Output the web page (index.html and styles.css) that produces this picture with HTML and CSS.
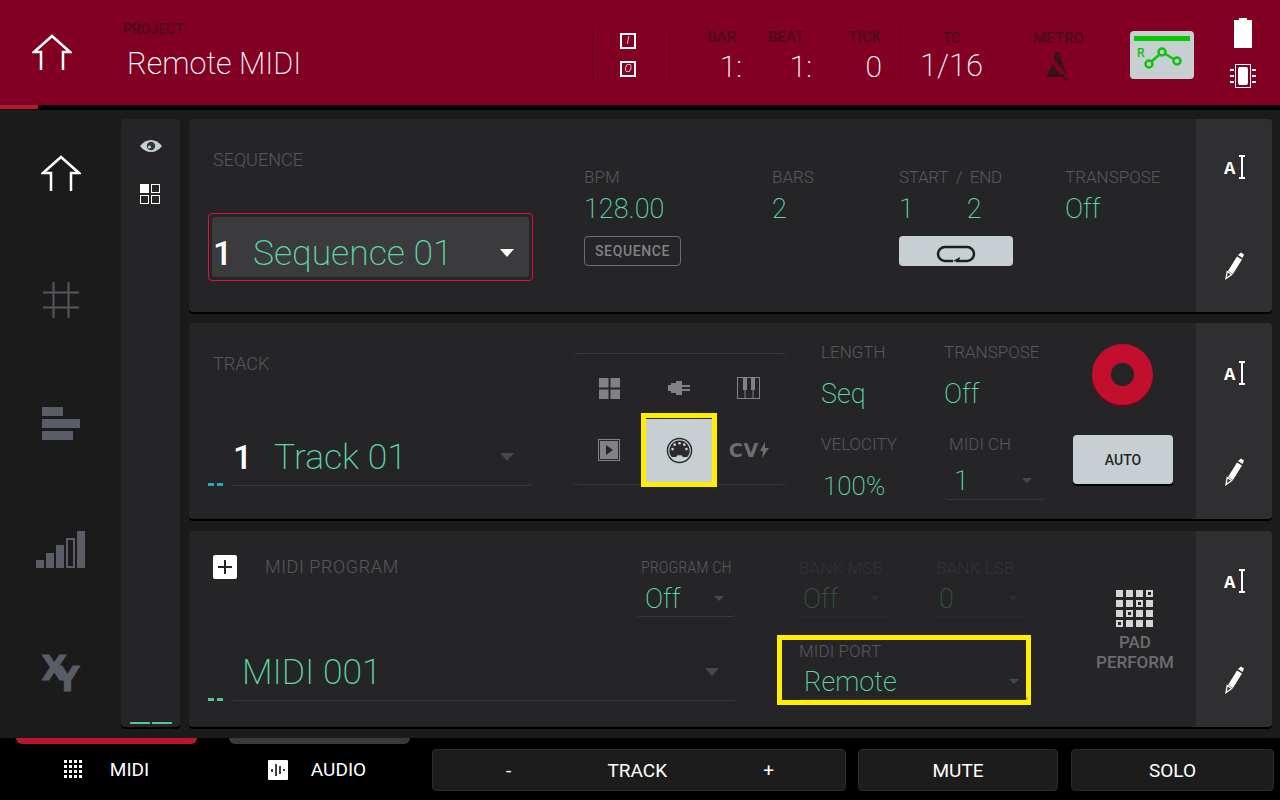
FILE: index.html
```html
<!DOCTYPE html>
<html lang="en">
<head>
  <meta charset="UTF-8">
  <title>Remote MIDI</title>
  <link rel="stylesheet" href="styles.css">
</head>
<body>
  <header class="topbar">
    <div class="top-home">
      <svg width="40" height="38" viewBox="0 0 40 38"><path class="home-line" d="M9 36V18H2L20 2l18 16h-7v18"/></svg>
    </div>
    <div class="project">
      <div class="top-label">PROJECT</div>
      <div class="project-name">Remote MIDI</div>
    </div>
    <div class="io">
      <span class="io-box">I</span>
      <span class="io-box">O</span>
    </div>
    <div class="transport">
      <div class="tp tp-bar"><div class="top-label">BAR</div><div class="tp-val">1:</div></div>
      <div class="tp tp-beat"><div class="top-label">BEAT</div><div class="tp-val">1:</div></div>
      <div class="tp tp-tick"><div class="top-label">TICK</div><div class="tp-val">0</div></div>
    </div>
    <div class="tc">
      <div class="top-label">TC</div>
      <div class="tp-val">1/16</div>
    </div>
    <div class="metro">
      <div class="top-label">METRO</div>
      <svg width="24" height="30" viewBox="0 0 24 30"><path fill="#3a1016" d="M10 0h4l8 24L9 7zM8 10l9 15H1z"/><path stroke="#820024" stroke-width="1.500" d="M1 3l15 19"/><path stroke="#3a1016" stroke-width="2" d="M16 22l6 7"/></svg>
    </div>
    <div class="remote">
      <div class="remote-bar"></div>
      <svg width="50" height="32" viewBox="0 0 50 32"><g fill="none" stroke="#0bc40b" stroke-width="2.500"><circle cx="15" cy="20" r="3.500"/><circle cx="28" cy="8" r="3.500"/><circle cx="43" cy="17" r="3.500"/><path d="M18 17l7-6M31.500 10l8 5"/></g><text x="3" y="13" class="remote-r">R</text></svg>
    </div>
    <div class="status">
      <svg width="18" height="30" viewBox="0 0 18 30"><path fill="#fff" d="M0 2h5V0h8v2h5v28H0z"/></svg>
      <svg width="26" height="24" viewBox="0 0 26 24"><rect x="5.500" y="0.500" width="15" height="23" fill="none" stroke="#fff"/><rect x="8" y="3" width="10" height="18" rx="2" fill="#fff"/><path stroke="#fff" stroke-width="2" d="M0 6h4M0 12h4M0 18h4M22 6h4M22 12h4M22 18h4"/></svg>
    </div>
  </header>
  <div class="progress-line"><div class="progress-fill"></div></div>

  <div class="main">
    <nav class="nav">
      <svg width="40" height="38" viewBox="0 0 40 38"><path class="home-line" d="M10 36V18H2L20 2l18 16h-8v18"/></svg>
      <svg width="36" height="36" viewBox="0 0 36 36"><path class="nav-line" d="M10.500 0v36M25.500 0v36M0 10.500h36M0 25.500h36"/></svg>
      <svg width="38" height="33" viewBox="0 0 38 33"><path fill="#5a5d65" d="M0 0h21v9H0zM0 12h38v9H0zM0 24h31v9H0z"/></svg>
      <svg class="nav-levels" width="50" height="37" viewBox="0 0 50 37"><path fill="#5a5d65" d="M0 29h8v8H0zM10 22h8v15h-8zM20 14h8v23h-8zM41 0h8v37h-8z"/><rect x="31" y="8" width="7" height="28" fill="none" stroke="#5a5d65" stroke-width="2"/></svg>
      <div class="xy"><span class="xy-x">X</span><span class="xy-y">Y</span></div>
    </nav>

    <aside class="strip">
      <svg class="eye" width="22" height="12" viewBox="0 0 22 12"><path fill="#c8cfd2" d="M0 6c3-4 7-6 11-6s8 2 11 6c-3 4-7 6-11 6S3 10 0 6z"/><circle cx="11" cy="6" r="4.200" fill="#33363a"/><circle cx="9.500" cy="7" r="1.500" fill="#c8cfd2"/></svg>
      <div class="view-grid">
        <span class="view-cell on"></span><span class="view-cell"></span>
        <span class="view-cell"></span><span class="view-cell"></span>
      </div>
      <div class="strip-dash"><span></span><span></span></div>
    </aside>

    <div class="panels">
      <!-- sequence -->
      <section class="panel panel-seq">
        <div class="panel-body seq-grid">
          <div class="seq-left">
            <div class="sec-label">SEQUENCE</div>
            <div class="seq-select">
              <div class="seq-inner">
                <span class="num">1</span>
                <span class="big-name">Sequence 01</span>
                <span class="tri tri-white"></span>
              </div>
            </div>
          </div>
          <div class="field">
            <div class="label">BPM</div>
            <div class="value">128.00</div>
            <button class="outline-btn">SEQUENCE</button>
          </div>
          <div class="field">
            <div class="label">BARS</div>
            <div class="value">2</div>
          </div>
          <div class="field field-loop">
            <div class="label label-startend">START&nbsp; /&nbsp; END</div>
            <div class="value value-pair"><span>1</span><span>2</span></div>
            <button class="loop-btn">
              <svg width="40" height="18" viewBox="0 0 40 18"><path fill="none" stroke="#1d1d1f" stroke-width="2.500" d="M17 16H9a7 7 0 0 1 0-14h22a7 7 0 0 1 0 14H20"/><path fill="#1d1d1f" d="M24 12l-7 4 6 1z"/></svg>
            </button>
          </div>
          <div class="field">
            <div class="label">TRANSPOSE</div>
            <div class="value">Off</div>
          </div>
        </div>
        <div class="panel-side">
          <svg class="ai" width="24" height="26" viewBox="0 0 24 26"><use href="#ai-icon"/></svg>
          <svg width="20" height="28" viewBox="0 0 20 28"><use href="#pencil-icon"/></svg>
        </div>
      </section>

      <!-- track -->
      <section class="panel panel-track">
        <div class="panel-body track-grid">
          <div class="track-left">
            <div class="sec-label">TRACK</div>
            <div class="name-row">
              <span class="dash dash-blue"></span>
              <div class="name-select">
                <span class="num num-track">1</span>
                <span class="big-name">Track 01</span>
                <span class="tri tri-dim"></span>
              </div>
            </div>
          </div>
          <div class="types">
            <span class="type-cell type-first"><svg width="21" height="21" viewBox="0 0 22 22"><path fill="#808285" d="M0 0h10v10H0zM12 0h10v10H12zM0 12h10v10H0zM12 12h10v10H12z"/></svg></span>
            <span class="type-cell type-first"><svg width="22" height="16" viewBox="0 0 22 16"><path fill="#808285" d="M0 5h3V3h5V1h6v4h8v2h-8v2h8v2h-8v4H8v-2H3v-2H0z"/></svg></span>
            <span class="type-cell type-first"><svg width="24" height="23" viewBox="0 0 24 23"><rect x="0.500" y="0.500" width="22" height="21" fill="none" stroke="#808285"/><path fill="#808285" d="M6 1h4v12H6zM14 1h4v12h-4z"/><path stroke="#808285" d="M8 13v9M16 13v9"/></svg></span>
            <span class="type-cell"><svg width="22" height="22" viewBox="0 0 22 22"><rect x="0.500" y="0.500" width="21" height="21" fill="none" stroke="#808285"/><rect x="2" y="2" width="18" height="18" fill="#808285"/><path fill="#252527" d="M8 6l7 5-7 5z"/></svg></span>
            <span class="type-cell type-on">
              <svg width="27" height="27" viewBox="0 0 28 28"><circle cx="14" cy="14" r="12.500" fill="none" stroke="#2b2b2e" stroke-width="1.500"/><path fill="#2b2b2e" d="M14 3.500a10.500 10.500 0 0 1 8 17.300h-4.500l-1.500-2h-4l-1.500 2H6a10.500 10.500 0 0 1 8-17.300z"/><g fill="#c8cfd2"><circle cx="14" cy="6.500" r="1.400"/><circle cx="9" cy="8" r="1.400"/><circle cx="19" cy="8" r="1.400"/><circle cx="6.800" cy="12.500" r="1.400"/><circle cx="21.200" cy="12.500" r="1.400"/></g></svg>
            </span>
            <span class="type-cell cv">CV<svg width="9" height="16" viewBox="0 0 9 16"><path fill="#6c6e71" d="M5 0L0 9h3l-1 7 7-10H5z"/></svg></span>
          </div>
          <div class="track-params">
            <div class="field">
              <div class="label">LENGTH</div>
              <div class="value">Seq</div>
            </div>
            <div class="field">
              <div class="label">TRANSPOSE</div>
              <div class="value">Off</div>
            </div>
            <div class="field">
              <div class="label">VELOCITY</div>
              <div class="value value-vel">100%</div>
            </div>
            <div class="field">
              <div class="label label-ch">MIDI CH</div>
              <div class="mini-select mini-ch"><span class="value">1</span><span class="tri tri-small"></span></div>
            </div>
          </div>
          <div class="rec-col">
            <div class="rec-btn"><span></span></div>
            <button class="auto-btn">AUTO</button>
          </div>
        </div>
        <div class="panel-side">
          <svg class="ai" width="24" height="26" viewBox="0 0 24 26"><use href="#ai-icon"/></svg>
          <svg width="20" height="28" viewBox="0 0 20 28"><use href="#pencil-icon"/></svg>
        </div>
      </section>

      <!-- midi program -->
      <section class="panel panel-prog">
        <div class="panel-body prog-grid">
          <div class="prog-main">
            <div class="prog-row-top">
              <div class="prog-title">
                <span class="plus-btn"><svg width="16" height="16" viewBox="0 0 16 16"><path stroke="#252527" stroke-width="2" d="M1 8h14M8 1v14"/></svg></span>
                <span class="sec-label">MIDI PROGRAM</span>
              </div>
              <div class="prog-top">
                <div class="prog-field">
                  <div class="label label-narrow">PROGRAM CH</div>
                  <div class="mini-select"><span class="value">Off</span><span class="tri tri-small"></span></div>
                </div>
                <div class="prog-field is-off">
                  <div class="label label-wide">BANK MSB</div>
                  <div class="mini-select"><span class="value">Off</span><span class="tri tri-small"></span></div>
                </div>
                <div class="prog-field is-off">
                  <div class="label label-wide">BANK LSB</div>
                  <div class="mini-select"><span class="value">0</span><span class="tri tri-small"></span></div>
                </div>
              </div>
            </div>
            <div class="prog-row-bottom">
              <div class="name-row">
                <span class="dash dash-green"></span>
                <div class="name-select name-prog">
                  <span class="big-name">MIDI 001</span>
                  <span class="tri tri-dim"></span>
                </div>
              </div>
              <div class="port-box">
                <div class="label label-wide">MIDI PORT</div>
                <div class="port-select"><span class="port-val">Remote</span><span class="tri tri-small"></span></div>
              </div>
            </div>
          </div>
          <div class="pad-perform">
            <svg width="38" height="38" viewBox="0 0 38 38">
              <g fill="#d5d5d5">
                <rect width="7" height="7"/><rect x="10" width="7" height="7"/><rect x="20" width="7" height="7"/><rect x="30" width="7" height="7"/>
                <rect y="10" width="7" height="7"/><rect x="10" y="10" width="7" height="7"/><rect x="20" y="10" width="7" height="7"/><rect x="30" y="10" width="7" height="7"/>
                <rect y="20" width="7" height="7"/><rect x="10" y="20" width="7" height="7"/><rect x="20" y="20" width="7" height="7"/><rect x="30" y="20" width="7" height="7"/>
                <rect y="30" width="7" height="7"/><rect x="10" y="30" width="7" height="7"/><rect x="20" y="30" width="7" height="7"/><rect x="30" y="30" width="7" height="7"/>
              </g>
              <g fill="#252527"><rect x="32" y="2" width="3" height="3"/><rect x="22" y="12" width="3" height="3"/><rect x="12" y="22" width="3" height="3"/><rect x="2" y="32" width="3" height="3"/></g>
            </svg>
            <div class="pad-text">PAD<br>PERFORM</div>
          </div>
        </div>
        <div class="panel-side">
          <svg class="ai" width="24" height="26" viewBox="0 0 24 26"><use href="#ai-icon"/></svg>
          <svg width="20" height="28" viewBox="0 0 20 28"><use href="#pencil-icon"/></svg>
        </div>
      </section>
    </div>
  </div>

  <footer class="footer">
    <div class="tab tab-on">
      <svg width="18" height="18" viewBox="0 0 18 18"><path stroke="#fff" stroke-width="3" stroke-dasharray="3 2" d="M0 1.500h18M0 6.500h18M0 11.500h18M0 16.500h18"/></svg>
      <span>MIDI</span>
    </div>
    <div class="tab tab-audio">
      <svg width="20" height="20" viewBox="0 0 20 20"><rect width="20" height="20" rx="1" fill="#fff"/><path stroke="#000" stroke-width="1.500" d="M4 9v3M8 4v12M12 6v8M16 9v2"/></svg>
      <span>AUDIO</span>
    </div>
    <div class="foot-btn foot-track"><span>-</span><span>TRACK</span><span>+</span></div>
    <div class="foot-btn foot-mute">MUTE</div>
    <div class="foot-btn foot-solo">SOLO</div>
  </footer>

  <svg class="defs" width="0" height="0">
    <defs>
      <g id="ai-icon">
        <text x="0" y="19" class="ai-a">A</text>
        <path fill="none" stroke="#fff" stroke-width="2" d="M15 1h6M18 1v22M15 23h6"/>
      </g>
      <g id="pencil-icon">
        <path fill="#fff" d="M14 3l3-2.500 3 2-1.500 3.500zM13 4.500l5 3L9 22l-5-3z"/>
        <path fill="none" stroke="#fff" stroke-width="1.300" d="M3.200 19.500l4.500 3L2 26.500z"/>
      </g>
    </defs>
  </svg>
</body>
</html>
```

FILE: styles.css
```css
* {
  box-sizing: border-box;
}

body {
  margin: 0;
  width: 1280px;
  height: 800px;
  overflow: hidden;
  background: #000;
  color: #fff;
  font-family: "Roboto", "Liberation Sans", sans-serif;
  font-weight: 300;
}

button {
  font-family: inherit;
  padding: 0;
}

.defs {
  position: absolute;
}

/* top bar */
.topbar {
  height: 105px;
  background: #820024;
  display: flex;
}

.top-home {
  width: 123px;
  padding: 34px 0 0 32px;
}

.home-line {
  fill: none;
  stroke: #fff;
  stroke-width: 2.5;
}

.nav-line {
  fill: none;
  stroke: #55585f;
  stroke-width: 2;
}

.project {
  width: 469px;
  padding-top: 20px;
}

.top-label {
  font-size: 14px;
  font-weight: 500;
  color: #4a0c1a;
  line-height: 18px;
}

.project-name {
  font-size: 30.5px;
  font-weight: 200;
  line-height: 40px;
  padding: 6px 0 0 4px;
}

.io {
  width: 78px;
  height: 54px;
  margin-top: 27px;
  border-left: 1px solid #6b001e;
  border-right: 1px solid #6b001e;
  padding: 6px 0 0 27px;
  display: flex;
  flex-direction: column;
  gap: 12px;
}

.io-box {
  width: 16px;
  height: 16px;
  border: 2px solid #fff;
  font-size: 11px;
  font-style: italic;
  line-height: 12px;
  text-align: center;
}

.transport {
  width: 230px;
  height: 54px;
  margin-top: 27px;
  border-right: 1px solid #6b001e;
  display: flex;
}

.tp {
  text-align: right;
}

.tp-bar {
  width: 72px;
}

.tp-beat {
  width: 70px;
}

.tp-tick {
  width: 70px;
}

.tp .top-label {
  font-size: 15px;
  padding-top: 1px;
  margin-bottom: 3px;
}

.tp-bar .top-label {
  padding-right: 6px;
}

.tp-beat .top-label {
  padding-right: 8px;
}

.tp-tick .top-label {
  padding-right: 1px;
}

.tp-val {
  font-size: 30px;
  line-height: 36px;
  font-weight: 200;
}

.tc {
  width: 107px;
  padding: 29px 4px 0 0;
  text-align: center;
}

.tc .tp-val {
  font-size: 31px;
  margin-top: 1px;
  white-space: nowrap;
}

.metro {
  width: 123px;
  padding: 29px 0 0 26px;
}

.metro .top-label {
  font-size: 15px;
}

.metro svg {
  display: block;
  margin: 5px 0 0 12px;
}

.remote {
  width: 64px;
  height: 48px;
  margin-top: 31px;
  background: #c8cfd2;
  border-radius: 4px;
  padding: 5px 4px 0;
}

.remote-bar {
  height: 5px;
  background: #06c606;
}

.remote svg {
  display: block;
  margin-top: 3px;
}

.remote-r {
  font-size: 12px;
  font-weight: 500;
  fill: #0bc40b;
}

.status {
  margin-left: 36px;
  width: 26px;
  padding-top: 18px;
  display: flex;
  flex-direction: column;
  align-items: center;
  gap: 16px;
}

.progress-line {
  height: 5px;
  background: #000;
}

.progress-fill {
  width: 38px;
  height: 4px;
  background: #b8182c;
}

/* main area */
.main {
  height: 628px;
  background: #1b1b1c;
  display: flex;
  padding: 9px 8px 0 0;
}

.nav {
  width: 121px;
  height: 619px;
  padding-top: 36px;
  display: flex;
  flex-direction: column;
  align-items: center;
  gap: 89px;
}

.nav-levels {
  margin-top: 2px;
}

.xy {
  width: 38px;
  height: 36px;
  font-family: "DejaVu Sans", sans-serif;
  font-size: 33px;
  font-weight: 700;
  line-height: 24px;
  color: #5a5d65;
  -webkit-text-stroke: 1px #5a5d65;
  display: flex;
}

.xy-x {
  width: 14px;
  height: 24px;
}

.xy-y {
  height: 24px;
  margin-top: 11px;
}

.strip {
  width: 59px;
  height: 608px;
  background: #252527;
  border-radius: 4px;
  box-shadow: 0 2px 0 #000;
  display: flex;
  flex-direction: column;
  align-items: center;
  padding-top: 21px;
  margin-right: 9px;
}

.view-grid {
  display: grid;
  grid-template-columns: 9px 9px;
  gap: 2px;
  margin: 32px 1px 0 0;
}

.view-cell {
  width: 9px;
  height: 9px;
  border: 1px solid #fff;
}

.view-cell.on {
  background: #fff;
}

.strip-dash {
  margin-top: auto;
  margin-bottom: 3px;
  display: flex;
  gap: 2px;
}

.strip-dash span {
  width: 20px;
  height: 2px;
  background: #55c596;
}

.panels {
  flex: 1;
  display: flex;
  flex-direction: column;
}

.panel {
  background: #252527;
  border-radius: 4px;
  box-shadow: 0 2px 0 #000;
  display: flex;
}

.panel-seq {
  height: 193px;
  margin-bottom: 11px;
}

.panel-track {
  height: 196px;
  margin-bottom: 12px;
}

.panel-prog {
  height: 196px;
}

.panel-body {
  width: 1007px;
}

.panel-side {
  width: 76px;
  background: #2f2f31;
  border-radius: 0 4px 4px 0;
  display: flex;
  flex-direction: column;
  align-items: center;
  padding-top: 36px;
  gap: 71px;
}

.panel-track .panel-side,
.panel-prog .panel-side {
  padding-top: 38px;
}

.ai {
  margin-left: 3px;
}

.ai-a {
  font-family: "Liberation Mono", monospace;
  font-size: 19px;
  font-weight: 700;
  fill: #fff;
}

/* fields */
.label {
  font-size: 17px;
  line-height: 20px;
  color: #58595c;
  white-space: nowrap;
}

.label-narrow {
  font-size: 16.4px;
  font-stretch: condensed;
}

.label-wide {
  letter-spacing: 0.1px;
}

.label-startend {
  letter-spacing: -0.3px;
}

.sec-label {
  font-size: 18px;
  line-height: 22px;
  color: #58595c;
}

.value {
  font-size: 27px;
  font-weight: 200;
  line-height: 32px;
  color: #5ed8a6;
}

.num {
  font-weight: 500;
  color: #fff;
  font-size: 34px;
}

.big-name {
  font-size: 35.5px;
  font-weight: 200;
  line-height: 44px;
  color: #5ed8a6;
}

.tri {
  width: 0;
  height: 0;
  border-style: solid;
  border-color: transparent;
  border-width: 8px 7px 0;
}

.tri-white {
  border-top-color: #fff;
}

.tri-dim {
  border-top-color: #47484b;
}

.tri-small {
  border-width: 5px 5px 0;
  border-top-color: #47484b;
}

/* sequence panel */
.seq-grid {
  display: grid;
  grid-template-columns: 376px 188px 127px 166px 1fr;
  padding-left: 19px;
}

.seq-left {
  width: 325px;
  padding-top: 30px;
}

.seq-left .sec-label {
  padding-left: 5px;
}

.seq-select {
  margin-top: 42px;
  height: 68px;
  border: 1px solid #d8143c;
  border-radius: 4px;
  padding: 3px;
}

.seq-inner {
  height: 60px;
  background: #3b3b3d;
  border-radius: 3px;
  display: flex;
  align-items: center;
  padding: 11px 15px 0 0;
}

.seq-inner .num {
  width: 41px;
  padding-left: 1px;
}

.seq-inner .big-name {
  flex: 1;
}

.field {
  padding-top: 48px;
}

.field .value {
  margin-top: 6px;
}

.outline-btn {
  display: block;
  margin-top: 11px;
  width: 97px;
  height: 30px;
  background: transparent;
  border: 1px solid #6c6d70;
  border-radius: 4px;
  color: #808285;
  font-size: 14px;
  font-weight: 500;
  letter-spacing: 0.6px;
}

.value-pair {
  display: flex;
  gap: 53px;
}

.loop-btn {
  display: block;
  margin-top: 11px;
  width: 114px;
  height: 30px;
  background: #c8cfd2;
  border: 0;
  border-radius: 4px;
}

.loop-btn svg {
  display: block;
  margin: 6px auto 0;
}

/* track panel */
.track-grid {
  display: grid;
  grid-template-columns: 364px 215px 252px 1fr;
  padding-left: 19px;
}

.track-left .sec-label {
  padding: 30px 0 0 5px;
}

.name-row {
  display: flex;
  align-items: flex-end;
}

.track-left .name-row {
  margin-top: 55px;
  width: 324px;
}

.dash {
  width: 15px;
  height: 3px;
  margin-right: 8px;
  background-image: linear-gradient(90deg, currentColor 6px, transparent 6px, transparent 9px, currentColor 9px);
}

.dash-blue {
  color: #2fa5c5;
}

.dash-green {
  color: #55c596;
}

.name-select {
  flex: 1;
  height: 56px;
  padding-bottom: 2px;
  border-bottom: 1px solid #3a3a3c;
  border-radius: 0 0 4px 4px;
  display: flex;
  align-items: center;
  padding-right: 18px;
}

.num-track {
  width: 43px;
  padding-left: 2px;
}

.name-select .big-name {
  flex: 1;
}

.types {
  width: 215px;
  height: 132px;
  margin-top: 30px;
  border-top: 1px solid #3a3a3c;
  border-bottom: 1px solid #3a3a3c;
  border-radius: 6px;
  display: grid;
  grid-template-columns: 74px 66px 74px;
  grid-template-rows: 64px 64px;
}

.type-cell {
  display: flex;
  align-items: center;
  justify-content: center;
}

.type-first {
  padding-top: 4px;
}

.type-on {
  background: #c8cfd2;
  outline: 5px solid #ffee00;
  box-shadow: inset 0 1px 0 #2b2b2e;
}

.cv {
  font-family: "DejaVu Sans", sans-serif;
  font-size: 19px;
  font-weight: 700;
  letter-spacing: 1px;
  color: #6c6e71;
  gap: 1px;
}

.track-params {
  display: grid;
  grid-template-columns: 123px 129px;
  grid-template-rows: 92px 1fr;
  padding-left: 34px;
}

.track-params .field {
  padding-top: 19px;
}

.track-params .label {
  margin-bottom: 16px;
}

.track-params .value {
  margin-top: 0;
}

.track-params .value-vel {
  padding-left: 2px;
  font-size: 26px;
}

.label-ch {
  padding-left: 5px;
}

.mini-select {
  width: 100px;
  height: 34px;
  display: flex;
  align-items: center;
  justify-content: space-between;
  padding: 0 12px 0 5px;
  border-bottom: 1px solid #3a3a3c;
  border-radius: 0 0 4px 4px;
}

.mini-ch {
  margin-top: -8px;
  height: 38px;
  padding-left: 10px;
}

.rec-col {
  display: flex;
  flex-direction: column;
  align-items: center;
  padding-top: 21px;
  margin-left: 34px;
  width: 100px;
}

.rec-btn {
  width: 61px;
  height: 61px;
  margin-right: 2px;
  border-radius: 50%;
  background: #c20f2e;
  box-shadow: 0 2px 0 #6c0618;
  display: flex;
  align-items: center;
  justify-content: center;
}

.rec-btn span {
  width: 23px;
  height: 23px;
  border-radius: 50%;
  background: #252527;
}

.auto-btn {
  margin-top: 30px;
  width: 100px;
  height: 49px;
  background: #c8cfd2;
  border: 0;
  border-radius: 4px;
  box-shadow: 0 2px 0 #000;
  color: #252527;
  font-size: 14px;
  font-weight: 500;
}

/* midi program panel */
.prog-grid {
  display: flex;
  padding-left: 19px;
}

.prog-main {
  width: 823px;
}

.prog-row-top {
  display: flex;
  justify-content: space-between;
  height: 86px;
}

.prog-title {
  display: flex;
  align-items: center;
  align-self: flex-start;
  gap: 28px;
  padding: 24px 0 0 5px;
}

.prog-title .sec-label {
  letter-spacing: 0.6px;
}

.plus-btn {
  width: 24px;
  height: 24px;
  background: #fff;
  border-radius: 2px;
  display: flex;
  align-items: center;
  justify-content: center;
}

.prog-top {
  display: flex;
  padding: 27px 1px 0 0;
}

.prog-field {
  width: 100px;
  margin-left: 38px;
}

.prog-field:first-child {
  margin-left: 0;
}

.prog-field:nth-child(2) {
  margin-left: 58px;
  width: 98px;
}

.prog-field .label {
  padding-left: 5px;
}

.prog-field:last-child .label {
  padding-left: 6px;
}

.prog-field .mini-select {
  width: auto;
  height: 39px;
  padding: 3px 12px 0 9px;
}

.is-off {
  opacity: 0.25;
}

.prog-row-bottom {
  display: flex;
  justify-content: space-between;
  margin-top: 18px;
  height: 70px;
}

.prog-row-bottom .name-row {
  width: 529px;
  height: 66px;
}

.name-prog {
  padding-left: 11px;
}

.port-box {
  width: 254px;
  height: 70px;
  border: 5px solid #ffee00;
  padding: 1px 0 0 17px;
}

.port-select {
  width: 229px;
  height: 39px;
  display: flex;
  justify-content: space-between;
  align-items: center;
  padding: 3px 9px 0 5px;
  border-bottom: 1px solid #3a3a3c;
  border-radius: 0 0 4px 4px;
}

.port-val {
  font-size: 27px;
  font-weight: 200;
  color: #5ed8a6;
}

.pad-perform {
  padding-top: 59px;
  text-align: center;
  margin-left: 59px;
  width: 90px;
}

.pad-perform svg {
  display: block;
  margin: 0 auto;
}

.pad-text {
  margin-top: 4px;
  color: #6c6d70;
  font-size: 17px;
  line-height: 20px;
  font-weight: 500;
}

/* footer */
.footer {
  height: 62px;
  background: #000;
  display: flex;
}

.tab {
  width: 181px;
  height: 6px;
  margin: 0 32px 0 0;
  background: #3a3a3c;
  border-radius: 0 0 6px 6px;
  display: flex;
  justify-content: center;
  gap: 28px;
}

.tab:first-child {
  margin-left: 16px;
}

.tab-on {
  background: #b8182c;
}

.tab-audio {
  gap: 23px;
  padding-right: 5px;
}

.tab svg {
  margin-top: 22px;
  flex: none;
}

.tab span {
  margin-top: 20px;
  font-size: 19px;
  font-weight: 400;
  line-height: 24px;
  height: 24px;
}

.foot-btn {
  height: 42px;
  margin-top: 11px;
  background: #1c1c1d;
  border: 1px solid #2a2a2b;
  border-radius: 4px;
  font-size: 19px;
  font-weight: 400;
  display: flex;
  align-items: center;
  justify-content: center;
}

.foot-track {
  width: 414px;
  margin-left: -10px;
  justify-content: space-between;
  padding: 0 71px 0 73px;
}

.foot-mute {
  width: 200px;
  margin-left: 12px;
}

.foot-solo {
  width: 203px;
  margin-left: 13px;
}
```
